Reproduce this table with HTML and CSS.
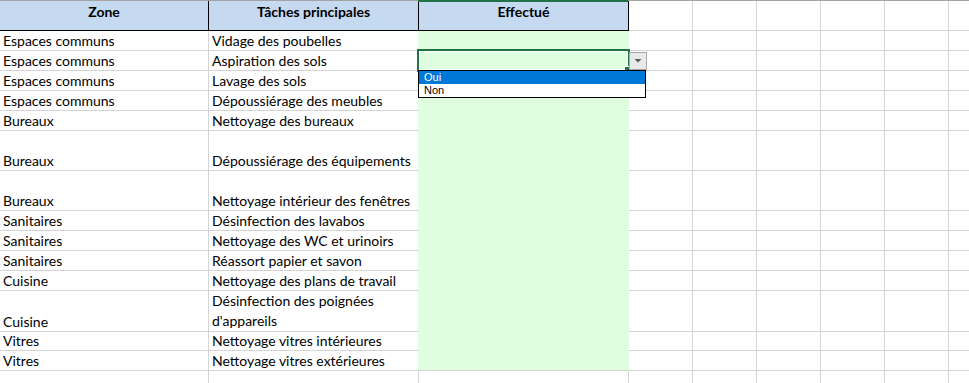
FILE: index.html
```html
<!DOCTYPE html>
<html lang="fr">
<head>
<meta charset="utf-8">
<title>Planning de nettoyage</title>
<link rel="stylesheet" href="styles.css">
</head>
<body>
<div class="sheet">
  <div class="row head">
    <div class="c hd">Zone</div>
    <div class="c hd">Tâches principales</div>
    <div class="c hd col-sel">Effectué</div>
    <div class="c"></div><div class="c"></div><div class="c"></div><div class="c"></div><div class="c"></div><div class="c"></div>
  </div>

  <div class="row">
    <div class="c">Espaces communs</div>
    <div class="c task">Vidage des poubelles</div>
    <div class="c fill"></div>
    <div class="c"></div><div class="c"></div><div class="c"></div><div class="c"></div><div class="c"></div><div class="c"></div>
  </div>

  <div class="row">
    <div class="c">Espaces communs</div>
    <div class="c task">Aspiration des sols</div>
    <div class="c fill active">
      <span class="sel-frame"></span>
      <span class="fill-handle"></span>
      <span class="dd-btn"><svg width="8" height="4" viewBox="0 0 8 4"><path d="M0.5 0 H7.5 L4 3.6 Z" fill="#5a5a5a"/></svg></span>
      <ul class="dd-list">
        <li class="on">Oui</li>
        <li>Non</li>
      </ul>
    </div>
    <div class="c"></div><div class="c"></div><div class="c"></div><div class="c"></div><div class="c"></div><div class="c"></div>
  </div>

  <div class="row">
    <div class="c">Espaces communs</div>
    <div class="c task">Lavage des sols</div>
    <div class="c fill"></div>
    <div class="c"></div><div class="c"></div><div class="c"></div><div class="c"></div><div class="c"></div><div class="c"></div>
  </div>

  <div class="row">
    <div class="c">Espaces communs</div>
    <div class="c task">Dépoussiérage des meubles</div>
    <div class="c fill"></div>
    <div class="c"></div><div class="c"></div><div class="c"></div><div class="c"></div><div class="c"></div><div class="c"></div>
  </div>

  <div class="row">
    <div class="c">Bureaux</div>
    <div class="c task">Nettoyage des bureaux</div>
    <div class="c fill"></div>
    <div class="c"></div><div class="c"></div><div class="c"></div><div class="c"></div><div class="c"></div><div class="c"></div>
  </div>

  <div class="row tall">
    <div class="c">Bureaux</div>
    <div class="c task">Dépoussiérage des équipements</div>
    <div class="c fill"></div>
    <div class="c"></div><div class="c"></div><div class="c"></div><div class="c"></div><div class="c"></div><div class="c"></div>
  </div>

  <div class="row tall">
    <div class="c">Bureaux</div>
    <div class="c task">Nettoyage intérieur des fenêtres</div>
    <div class="c fill"></div>
    <div class="c"></div><div class="c"></div><div class="c"></div><div class="c"></div><div class="c"></div><div class="c"></div>
  </div>

  <div class="row">
    <div class="c">Sanitaires</div>
    <div class="c task">Désinfection des lavabos</div>
    <div class="c fill"></div>
    <div class="c"></div><div class="c"></div><div class="c"></div><div class="c"></div><div class="c"></div><div class="c"></div>
  </div>

  <div class="row">
    <div class="c">Sanitaires</div>
    <div class="c task">Nettoyage des WC et urinoirs</div>
    <div class="c fill"></div>
    <div class="c"></div><div class="c"></div><div class="c"></div><div class="c"></div><div class="c"></div><div class="c"></div>
  </div>

  <div class="row">
    <div class="c">Sanitaires</div>
    <div class="c task">Réassort papier et savon</div>
    <div class="c fill"></div>
    <div class="c"></div><div class="c"></div><div class="c"></div><div class="c"></div><div class="c"></div><div class="c"></div>
  </div>

  <div class="row">
    <div class="c">Cuisine</div>
    <div class="c task">Nettoyage des plans de travail</div>
    <div class="c fill"></div>
    <div class="c"></div><div class="c"></div><div class="c"></div><div class="c"></div><div class="c"></div><div class="c"></div>
  </div>

  <div class="row tall">
    <div class="c">Cuisine</div>
    <div class="c task wrap">Désinfection des poignées d'appareils</div>
    <div class="c fill"></div>
    <div class="c"></div><div class="c"></div><div class="c"></div><div class="c"></div><div class="c"></div><div class="c"></div>
  </div>

  <div class="row">
    <div class="c">Vitres</div>
    <div class="c task">Nettoyage vitres intérieures</div>
    <div class="c fill"></div>
    <div class="c"></div><div class="c"></div><div class="c"></div><div class="c"></div><div class="c"></div><div class="c"></div>
  </div>

  <div class="row last">
    <div class="c">Vitres</div>
    <div class="c task">Nettoyage vitres extérieures</div>
    <div class="c fill"></div>
    <div class="c"></div><div class="c"></div><div class="c"></div><div class="c"></div><div class="c"></div><div class="c"></div>
  </div>

  <div class="row">
    <div class="c"></div><div class="c"></div><div class="c"></div>
    <div class="c"></div><div class="c"></div><div class="c"></div><div class="c"></div><div class="c"></div><div class="c"></div>
  </div>
</div>
</body>
</html>
```
FILE: styles.css
```css
html, body {
  margin: 0;
  padding: 0;
  background: #fff;
  overflow: hidden;
}

body {
  font-family: "Lato", "Liberation Sans", sans-serif;
  font-size: 14px;
  color: #000;
}

.sheet {
  width: 1013px;
  border-top: 1px solid #a3a3a3;
}

/* one spreadsheet row: three data columns then empty 64px columns */
.row {
  display: grid;
  grid-template-columns: 209px 210px 210px repeat(6, 64px);
  height: 20px;
}

.row.head { height: 30px; }
.row.tall { height: 40px; }

.c {
  box-sizing: border-box;
  position: relative;
  display: flex;
  align-items: flex-end;
  padding: 0 3px;
  border-right: 1px solid #d4d4d4;
  border-bottom: 1px solid #d4d4d4;
  white-space: nowrap;
  line-height: 18px;
}

/* header cells */
.c.hd {
  background: #c5d9f1;
  border-right-color: #000;
  border-bottom-color: #000;
  font-weight: 700;
  justify-content: center;
  align-items: flex-start;
  padding-top: 2px;
}

.c.col-sel::before {
  content: "";
  position: absolute;
  left: -1px;
  right: 0;
  top: -1px;
  height: 2px;
  background: #217346;
}

/* "Effectué" column fill hides the grid lines */
.c.task { border-right-color: #dffddf; }
.c.fill {
  background: #dffddf;
  border-right-color: #dffddf;
  border-bottom-color: #dffddf;
}
.row.last .c.fill { border-bottom-color: #d4d4d4; }

.c.wrap {
  white-space: normal;
  line-height: 20px;
}

/* active cell with its validation list */
.sel-frame {
  position: absolute;
  left: -2px;
  top: -2px;
  width: 213px;
  height: 23px;
  box-sizing: border-box;
  border: 2px solid #217346;
  box-shadow: inset 0 0 0 1px #fff;
}

.fill-handle {
  position: absolute;
  left: 206px;
  top: 16px;
  width: 5px;
  height: 5px;
  background: #217346;
  box-shadow: 0 0 0 1px #fff;
}

.dd-btn {
  position: absolute;
  left: 210px;
  top: 1px;
  width: 18px;
  height: 18px;
  box-sizing: border-box;
  border: 1px solid #a6a6a6;
  background: #e9e9e9;
  display: flex;
  align-items: center;
  justify-content: center;
  z-index: 2;
}

.dd-list {
  position: absolute;
  left: -1px;
  top: 19px;
  width: 228px;
  margin: 0;
  padding: 0;
  list-style: none;
  box-sizing: border-box;
  border: 1px solid #000;
  background: #fff;
  font-family: "Liberation Sans", sans-serif;
  font-size: 11px;
  z-index: 3;
}

.dd-list li {
  height: 13px;
  line-height: 13px;
  padding-left: 5px;
  color: #000;
}

.dd-list li.on {
  background: #0078d7;
  color: #fff;
}
```
